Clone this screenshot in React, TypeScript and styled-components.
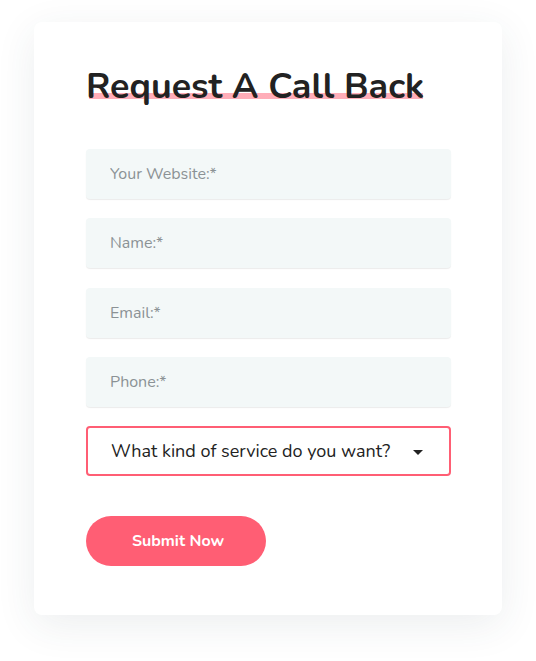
import React from 'react';
import styled, { createGlobalStyle } from 'styled-components';

const GlobalStyle = createGlobalStyle`
  html, body {
    margin: 0;
    padding: 0;
    background: #ffffff;
  }
  body {
    font-family: "Nunito", "Lato", "Noto Sans", sans-serif;
  }
  * {
    box-sizing: border-box;
  }
`;

const Page = styled.div`
  padding: 22px 34px 45px 34px;
`;

const Card = styled.form`
  width: 468px;
  background: #ffffff;
  border-radius: 8px;
  padding: 42px 51px 49px 52px;
  box-shadow: 0 10px 40px rgba(40, 70, 80, 0.09);
  display: flex;
  flex-direction: column;
`;

const Title = styled.h2`
  margin: 0 0 39px 0;
  font-size: 35.8px;
  font-weight: 700;
  line-height: 46px;
  color: #222222;
`;

const Highlight = styled.span`
  background-image: linear-gradient(rgba(255, 92, 114, 0.5), rgba(255, 92, 114, 0.5));
  background-repeat: no-repeat;
  background-size: calc(100% - 4px) 6px;
  background-position: 3px 31px;
`;

const Field = styled.input`
  width: 100%;
  height: 50px;
  margin: 0 0 19.3px 0;
  padding: 0 24px;
  border: none;
  border-radius: 4px;
  background: #f3f8f8;
  box-shadow: 0 1px 1px rgba(0, 0, 0, 0.08);
  font-family: inherit;
  font-size: 16px;
  color: #222;
  outline: none;

  &::placeholder {
    color: #8b9295;
  }
`;

const Select = styled.div`
  height: 50px;
  margin: 0 0 40px 0;
  padding: 0 26px 0 23px;
  border: 2px solid #ff5e74;
  border-radius: 4px;
  display: flex;
  align-items: center;
  justify-content: space-between;
  font-size: 18px;
  color: #222222;
`;

const Caret = styled.span`
  width: 0;
  height: 0;
  border-left: 5px solid transparent;
  border-right: 5px solid transparent;
  border-top: 5px solid #222222;
  margin-top: 2px;
`;

const SubmitButton = styled.button`
  width: 180px;
  height: 50px;
  border: none;
  border-radius: 25px;
  background: #ff5e74;
  color: #ffffff;
  font-family: inherit;
  font-size: 16px;
  font-weight: 700;
  padding: 0 0 0 4px;
  cursor: pointer;
`;

export default function App() {
  return (
    <>
      <GlobalStyle />
      <Page>
        <Card onSubmit={(e) => e.preventDefault()}>
          <Title>
            <Highlight>Request A Call Back</Highlight>
          </Title>
          <Field placeholder="Your Website:*" />
          <Field placeholder="Name:*" />
          <Field placeholder="Email:*" />
          <Field placeholder="Phone:*" />
          <Select>
            <span>What kind of service do you want?</span>
            <Caret />
          </Select>
          <SubmitButton type="submit">Submit Now</SubmitButton>
        </Card>
      </Page>
    </>
  );
}
